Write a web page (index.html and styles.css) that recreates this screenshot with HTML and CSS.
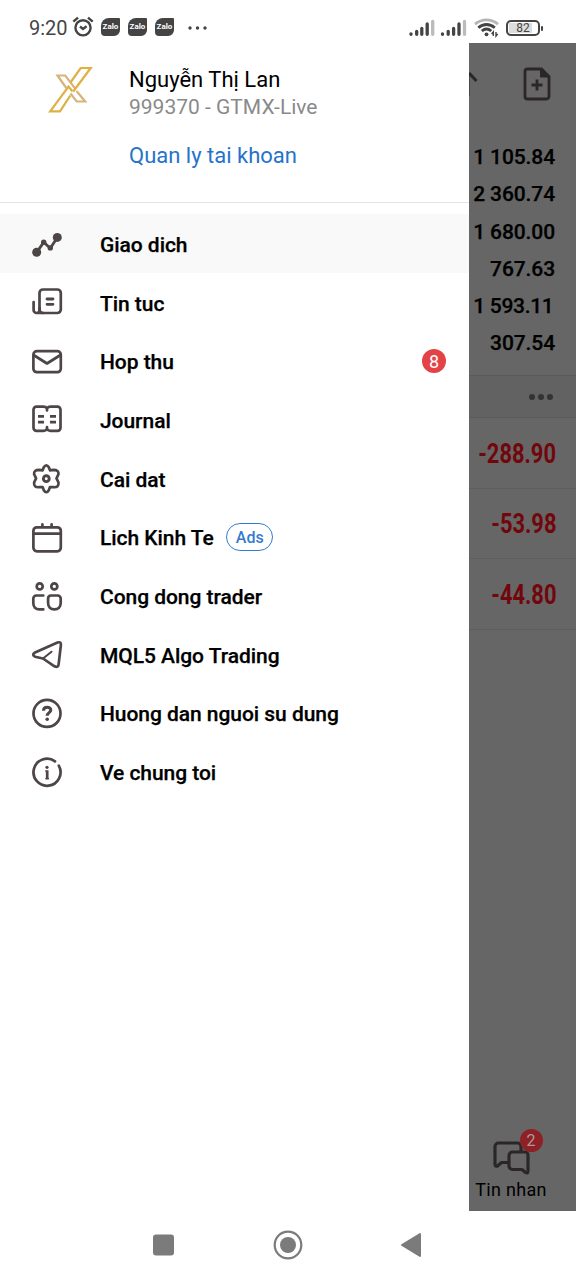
FILE: index.html
```html
<!DOCTYPE html>
<html lang="vi">
<head>
<meta charset="utf-8">
<title>Menu</title>
<link rel="stylesheet" href="styles.css">
</head>
<body>
<div class="phone">
  <header class="status">
    <span class="clock">9:20</span>
    <svg class="alarm" width="22" height="22" viewBox="0 0 22 22" fill="none" stroke="#444" stroke-width="2.400"><circle cx="11" cy="11.800" r="7.600"/><path d="M1.300 5.700 6 1.600M16 1.600l4.700 4.100M8 10.500l3 2.500 3.600-2.800"/></svg>
    <span class="zalo">Zalo</span><span class="zalo">Zalo</span><span class="zalo">Zalo</span>
    <svg class="more" width="20" height="6" viewBox="0 0 20 6" fill="#444"><circle cx="2" cy="3" r="1.700"/><circle cx="9.500" cy="3" r="1.700"/><circle cx="17" cy="3" r="1.700"/></svg>
    <svg class="signal" width="58" height="18" viewBox="0 0 58 18" stroke-width="3.300" stroke-linecap="round"><path stroke="#444" d="M2 15.300v-.5M7.700 15.300v-3M12.800 15.300V9.500M18.200 15.300V5M33.500 15.300v-.5M39.200 15.300v-3M44.600 15.300V9.500M50 15.300V5"/><path stroke="#bbb" d="M23.700 15.300V2.500M55.500 15.300V2.500"/></svg>
    <svg class="wifi" width="26" height="20" viewBox="0 0 26 20" fill="none" stroke="#444" stroke-width="2.800"><path stroke="#b5b5b5" d="M1 6.200C8 .5 17 .5 24 6.200"/><path d="M4.300 9.700c5-4.300 11.500-4.300 16.500 0M7.800 13c3-2.500 6.500-2.500 9.500 0"/><circle cx="12.500" cy="16.300" r="1.900" fill="#444" stroke="none"/><path stroke-width="1.400" d="M19.300 18v-4l-1.700 2M22 14v4l1.700-2"/></svg>
    <span class="battery"><span class="level">82</span></span>
  </header>

  <main class="main">
    <aside class="drawer">
      <section class="account">
        <svg class="logo" width="45" height="47" viewBox="0 0 45 47" fill="none" stroke-width="2.200"><path stroke="#d6b47c" d="M18.300 22 9.500 9.500h7.800L27 22.300M28.500 25l8.700 10.500h-8.500L22.500 27.500"/><path stroke="#dfb043" d="M22.500 16.500 32.700 2h10L25.300 25.500M22.300 29.500 12 45.300H2.200L20.500 20.500l4 5"/></svg>
        <div class="identity">
          <div class="name">Nguyễn Thị Lan</div>
          <div class="login">999370 - GTMX-Live</div>
          <a class="manage">Quan ly tai khoan</a>
        </div>
      </section>
      <nav class="menu">
        <a class="item active"><svg class="icon" viewBox="0 0 32 32"><path d="m5.700 24.400 7-10.200 6.600 6L26.300 9.400" stroke-width="2.800"/><g fill="#4d4546" stroke="none"><circle cx="5.700" cy="24.200" r="4.500"/><circle cx="26.300" cy="9.400" r="4.500"/><circle cx="12.700" cy="14.300" r="2.700"/><circle cx="19.300" cy="19.900" r="2.700"/></g></svg><span class="label">Giao dich</span></a>
        <a class="item"><svg class="icon" viewBox="0 0 32 32"><rect x="8.500" y="3.500" width="21.300" height="23.500" rx="3.500"/><path d="M2.600 16v8a3 3 0 0 0 6 0v-2M5.600 27H12"/><path d="M16 13h6M16 18.300h6" stroke-width="2.800"/></svg><span class="label">Tin tuc</span></a>
        <a class="item"><svg class="icon" viewBox="0 0 32 32"><rect x="2.400" y="6.200" width="27.400" height="21" rx="3.500"/><path d="m3.300 10.500 12.700 8 12.700-8"/></svg><span class="label">Hop thu</span><span class="badge">8</span></a>
        <a class="item"><svg class="icon" viewBox="0 0 32 32"><path d="M16 4.500C15 3 14 2.700 12.500 2.700H5.500a3 3 0 0 0-3 3v18.100a3 3 0 0 0 3 3h7c1.500 0 2.500-.3 3.500-1.800 1 1.500 2 1.800 3.500 1.800h7a3 3 0 0 0 3-3V5.700a3 3 0 0 0-3-3h-7C18 2.700 17 3 16 4.500zM16 4.500v2M16 23v2"/><path stroke-linecap="butt" d="M7 12.300h6M7 18.200h6M19 12.300h6M19 18.200h6"/></svg><span class="label">Journal</span></a>
        <a class="item"><svg class="icon" viewBox="0 0 32 32"><path d="M12.800 5.300Q15.300 1.300 17.800 5.300L19 8.300 22.400 7.800Q28 7.800 27.500 12.200L25.500 16.300 27.500 20.500Q28 25.800 22.600 25.200L19 25 17.800 28.200Q15.300 32.300 12.800 28.200L11.600 25 8.100 25.200Q2.600 25.800 3.100 20.500L5.100 16.300 3.100 12.200Q2.600 7.800 8.200 7.800L11.600 8.300z"/><circle cx="15.300" cy="16.700" r="2.900" stroke-width="2.900"/></svg><span class="label">Cai dat</span></a>
        <a class="item"><svg class="icon" viewBox="0 0 32 32"><rect x="2.400" y="6.300" width="27.400" height="24" rx="3.500"/><path d="M2.500 12.700h27.300M11.400 3.400v2.400M20.600 3.400v2.400"/></svg><span class="label">Lich Kinh Te</span><span class="ads">Ads</span></a>
        <a class="item"><svg class="icon" viewBox="0 0 32 32"><circle cx="8.700" cy="6.400" r="3"/><circle cx="23.300" cy="6.400" r="3"/><path d="M12.300 15.500H5.300a3 3 0 0 0-3 3v4.500c0 4 2.500 6.400 6 6.400h4M20 15.500h6.700a3 3 0 0 1 3 3v4.500c0 4-2.500 6.400-6.300 6.400s-6.300-2.400-6.300-6.400v-4.500a3 3 0 0 1 2.900-3z"/></svg><span class="label">Cong dong trader</span></a>
        <a class="item"><svg class="icon" viewBox="0 0 32 32"><path d="M3.500 14.800 26.500 4.600Q30.300 3.200 29.900 7L27.600 26.300Q27.200 30 23.500 28.300L12 20.500 4 18.700Q.7 16.800 3.500 14.800z"/><path d="m12 20.500 8.500-6.800" stroke-width="2"/></svg><span class="label">MQL5 Algo Trading</span></a>
        <a class="item"><svg class="icon" viewBox="0 0 32 32"><circle cx="16" cy="16.400" r="13.500"/><path stroke-linecap="butt" d="M12.500 13.700c0-4.700 7.500-4.400 7.300-.5-.1 2.500-3.600 2.500-3.600 5.600" stroke-width="3"/><circle cx="16.200" cy="22.300" r="1.800" fill="#4d4546" stroke="none"/></svg><span class="label">Huong dan nguoi su dung</span></a>
        <a class="item"><svg class="icon" viewBox="0 0 32 32"><path d="M24 5.400a13.500 13.500 0 1 0 3.800 4.300"/><path stroke-linecap="butt" stroke-width="1.300" d="M14.300 15h1.500M14.300 22.700h3.800"/><path stroke-linecap="butt" stroke-width="2.700" d="M16.200 14.300v9"/><circle cx="16" cy="11.300" r="1.600" fill="#4d4546" stroke="none"/></svg><span class="label">Ve chung toi</span></a>
      </nav>
    </aside>

    <section class="behind">
      <div class="toolbar">
        <svg class="arrow" width="10" height="36" viewBox="0 0 10 36" fill="none" stroke="#2b2728" stroke-width="3"><path d="m0 6 7.500 8"/><path d="M0 6v23" stroke-width="1"/></svg>
        <svg class="neworder" width="28" height="34" viewBox="0 0 28 34" fill="none" stroke="#2b2728" stroke-width="2.800"><path d="M4.500 2h14L26 9.500v20a2.500 2.500 0 0 1-2.500 2.500h-19A2.500 2.500 0 0 1 2 29.500v-25A2.500 2.500 0 0 1 4.500 2z"/><path d="M17.500 2v8H26z" fill="#2b2728" stroke-width="1"/><path d="M8.500 18h11M14 12.500v11"/></svg>
      </div>
      <div class="figures">
        <span>1 105.84</span><span>2 360.74</span><span>1 680.00</span><span>767.63</span><span class="ones">1 593.11</span><span>307.54</span>
      </div>
      <div class="strip"><i></i><i></i><i></i></div>
      <div class="loss"><span>-288.90</span></div>
      <div class="loss"><span>-53.98</span></div>
      <div class="loss"><span>-44.80</span></div>
      <div class="tab">
        <div class="tabicon">
          <svg width="37" height="34" viewBox="0 0 37 34" fill="none" stroke="#2b2728" stroke-width="3.200" stroke-linejoin="round"><path d="M15 21.500H8.500L4.500 25Q2 26 2 23V5.500a3.500 3.500 0 0 1 3.500-3.500h19A3.500 3.500 0 0 1 28 5.500V11"/><path d="M19.500 11h12.500a3 3 0 0 1 3 3v16Q35 33 32.500 31.500L29 28.500h-9.500A3.500 3.500 0 0 1 16 25V14.500a3.500 3.500 0 0 1 3.500-3.500z"/></svg>
          <span class="count">2</span>
        </div>
        <span class="tablabel">Tin nhan</span>
      </div>
    </section>
  </main>

  <footer class="sysnav">
    <svg width="21" height="30" viewBox="0 0 21 30"><rect y="4.500" width="21" height="21" rx="3" fill="#7b7b7b"/></svg>
    <svg width="30" height="30" viewBox="0 0 30 30" fill="#7b7b7b"><circle cx="15" cy="15" r="13.300" fill="none" stroke="#7b7b7b" stroke-width="2.200"/><circle cx="15" cy="15" r="8"/></svg>
    <svg width="20" height="30" viewBox="0 0 20 30" fill="#7b7b7b" stroke="#7b7b7b" stroke-width="2" stroke-linejoin="round"><path d="M1 15 19 4v22z"/></svg>
  </footer>
</div>
</body>
</html>
```
FILE: styles.css
```css
* { box-sizing: border-box; }
body { margin: 0; background: #fff; font-family: Roboto, "Liberation Sans", sans-serif; color: #000; }
svg { display: block; flex: none; }
.phone { width: 576px; height: 1280px; display: flex; flex-direction: column; overflow: hidden; }

.status { height: 43px; display: flex; align-items: flex-start; padding: 17px 36px 0 29px; color: #444; }
.clock { font-size: 20px; width: 43px; line-height: 22px; white-space: nowrap; }
.alarm { margin: -1px 7px 0 0; }
.zalo { width: 19px; height: 18px; margin: 1px 8px 0 0; background: #444; color: #fff; border-radius: 8px 1px 6px 4px; font-size: 8px; font-weight: 700; line-height: 18px; text-align: center; }
.more { margin: 8px 0 0 6px; }
.signal { margin: 2px 7px 0 auto; }
.wifi { margin: 1px 6px 0 0; }
.battery { width: 34px; height: 16px; margin-top: 3px; border: 2px solid #444; border-radius: 5px; position: relative; padding: 1px; flex: none; }
.battery::after { content: ""; position: absolute; right: -5px; top: 4px; width: 2px; height: 5px; background: #444; border-radius: 1px; }
.level { display: block; height: 10px; line-height: 10.500px; font-size: 12px; text-align: center; background: linear-gradient(90deg, #ddd 82%, #fff 82%); }

.main { height: 1168px; display: flex; }
.drawer { width: 469px; flex: none; background: #fff; }
.account { height: 160px; border-bottom: 1.500px solid #e4e4e4; display: flex; padding: 23px 0 0 48px; }
.identity { margin-left: 36px; display: flex; flex-direction: column; align-items: flex-start; white-space: nowrap; }
.name { font-size: 22px; line-height: 28px; }
.login { font-size: 21px; line-height: 26px; color: #8a8a8a; }
.manage { font-size: 22px; line-height: 28px; margin-top: 22px; color: #2673c9; }
.menu { padding-top: 11.300px; }
.item { height: 58.670px; display: flex; align-items: center; padding: 0 23px 0 31px; }
.active { background: #f9f9f9; }
.icon { width: 32px; height: 32px; margin-right: 37px; fill: none; stroke: #4d4546; stroke-width: 2.700; stroke-linecap: round; stroke-linejoin: round; }
.label { font-size: 21px; font-weight: 500; line-height: 26px; padding-top: 3px; white-space: nowrap; letter-spacing: -.05px; -webkit-text-stroke: .25px #000; }
.badge { margin-left: auto; width: 24px; height: 24px; border-radius: 50%; background: #e34247; color: #fff; font-size: 18px; line-height: 25px; text-align: center; }
.ads { margin-left: 12.500px; width: 47px; height: 28px; border: 1.500px solid #347bd0; border-radius: 14px; color: #347bd0; font-size: 16px; font-weight: 500; line-height: 27px; text-align: center; }

.behind { flex: 1; min-width: 0; background: #666; display: flex; flex-direction: column; overflow: hidden; }
.toolbar { height: 95px; display: flex; justify-content: space-between; padding: 24px 25px 0 0; }
.figures { height: 237px; display: flex; flex-direction: column; align-items: flex-end; padding-right: 21px; }
.figures span { height: 37.300px; line-height: 38px; font-size: 21px; font-weight: 500; white-space: nowrap; letter-spacing: -.1px; -webkit-text-stroke: .25px #000; }
.figures .ones { padding-right: 1.500px; letter-spacing: -.3px; }
.strip { height: 43px; border-top: 1px solid #5b5b5b; border-bottom: 1px solid #5b5b5b; background: #626262; display: flex; align-items: center; justify-content: flex-end; gap: 3px; padding-right: 23px; }
.strip i { width: 6px; height: 6px; border-radius: 50%; background: #333; }
.loss { height: 70.500px; border-bottom: 1.500px solid #5e5e5e; display: flex; align-items: center; justify-content: flex-end; padding-right: 20px; color: #71060d; font-size: 27px; font-weight: 700; }
.loss span { transform: scaleX(.81); transform-origin: right; white-space: nowrap; padding-top: 2px; }
.tab { margin-top: auto; height: 84px; display: flex; flex-direction: column; align-items: center; padding-right: 23px; }
.tabicon { position: relative; margin-top: 14px; }
.count { position: absolute; left: 27px; top: -12px; width: 23px; height: 23px; border-radius: 50%; background: #8f2126; color: #a99; font-size: 16px; line-height: 24px; text-align: center; }
.tablabel { font-size: 18px; line-height: 22px; margin-top: 4px; white-space: nowrap; letter-spacing: .3px; }

.sysnav { height: 69px; display: flex; align-items: center; padding: 0 0 1px 153px; }
.sysnav svg + svg { margin-left: 98.500px; }
```
